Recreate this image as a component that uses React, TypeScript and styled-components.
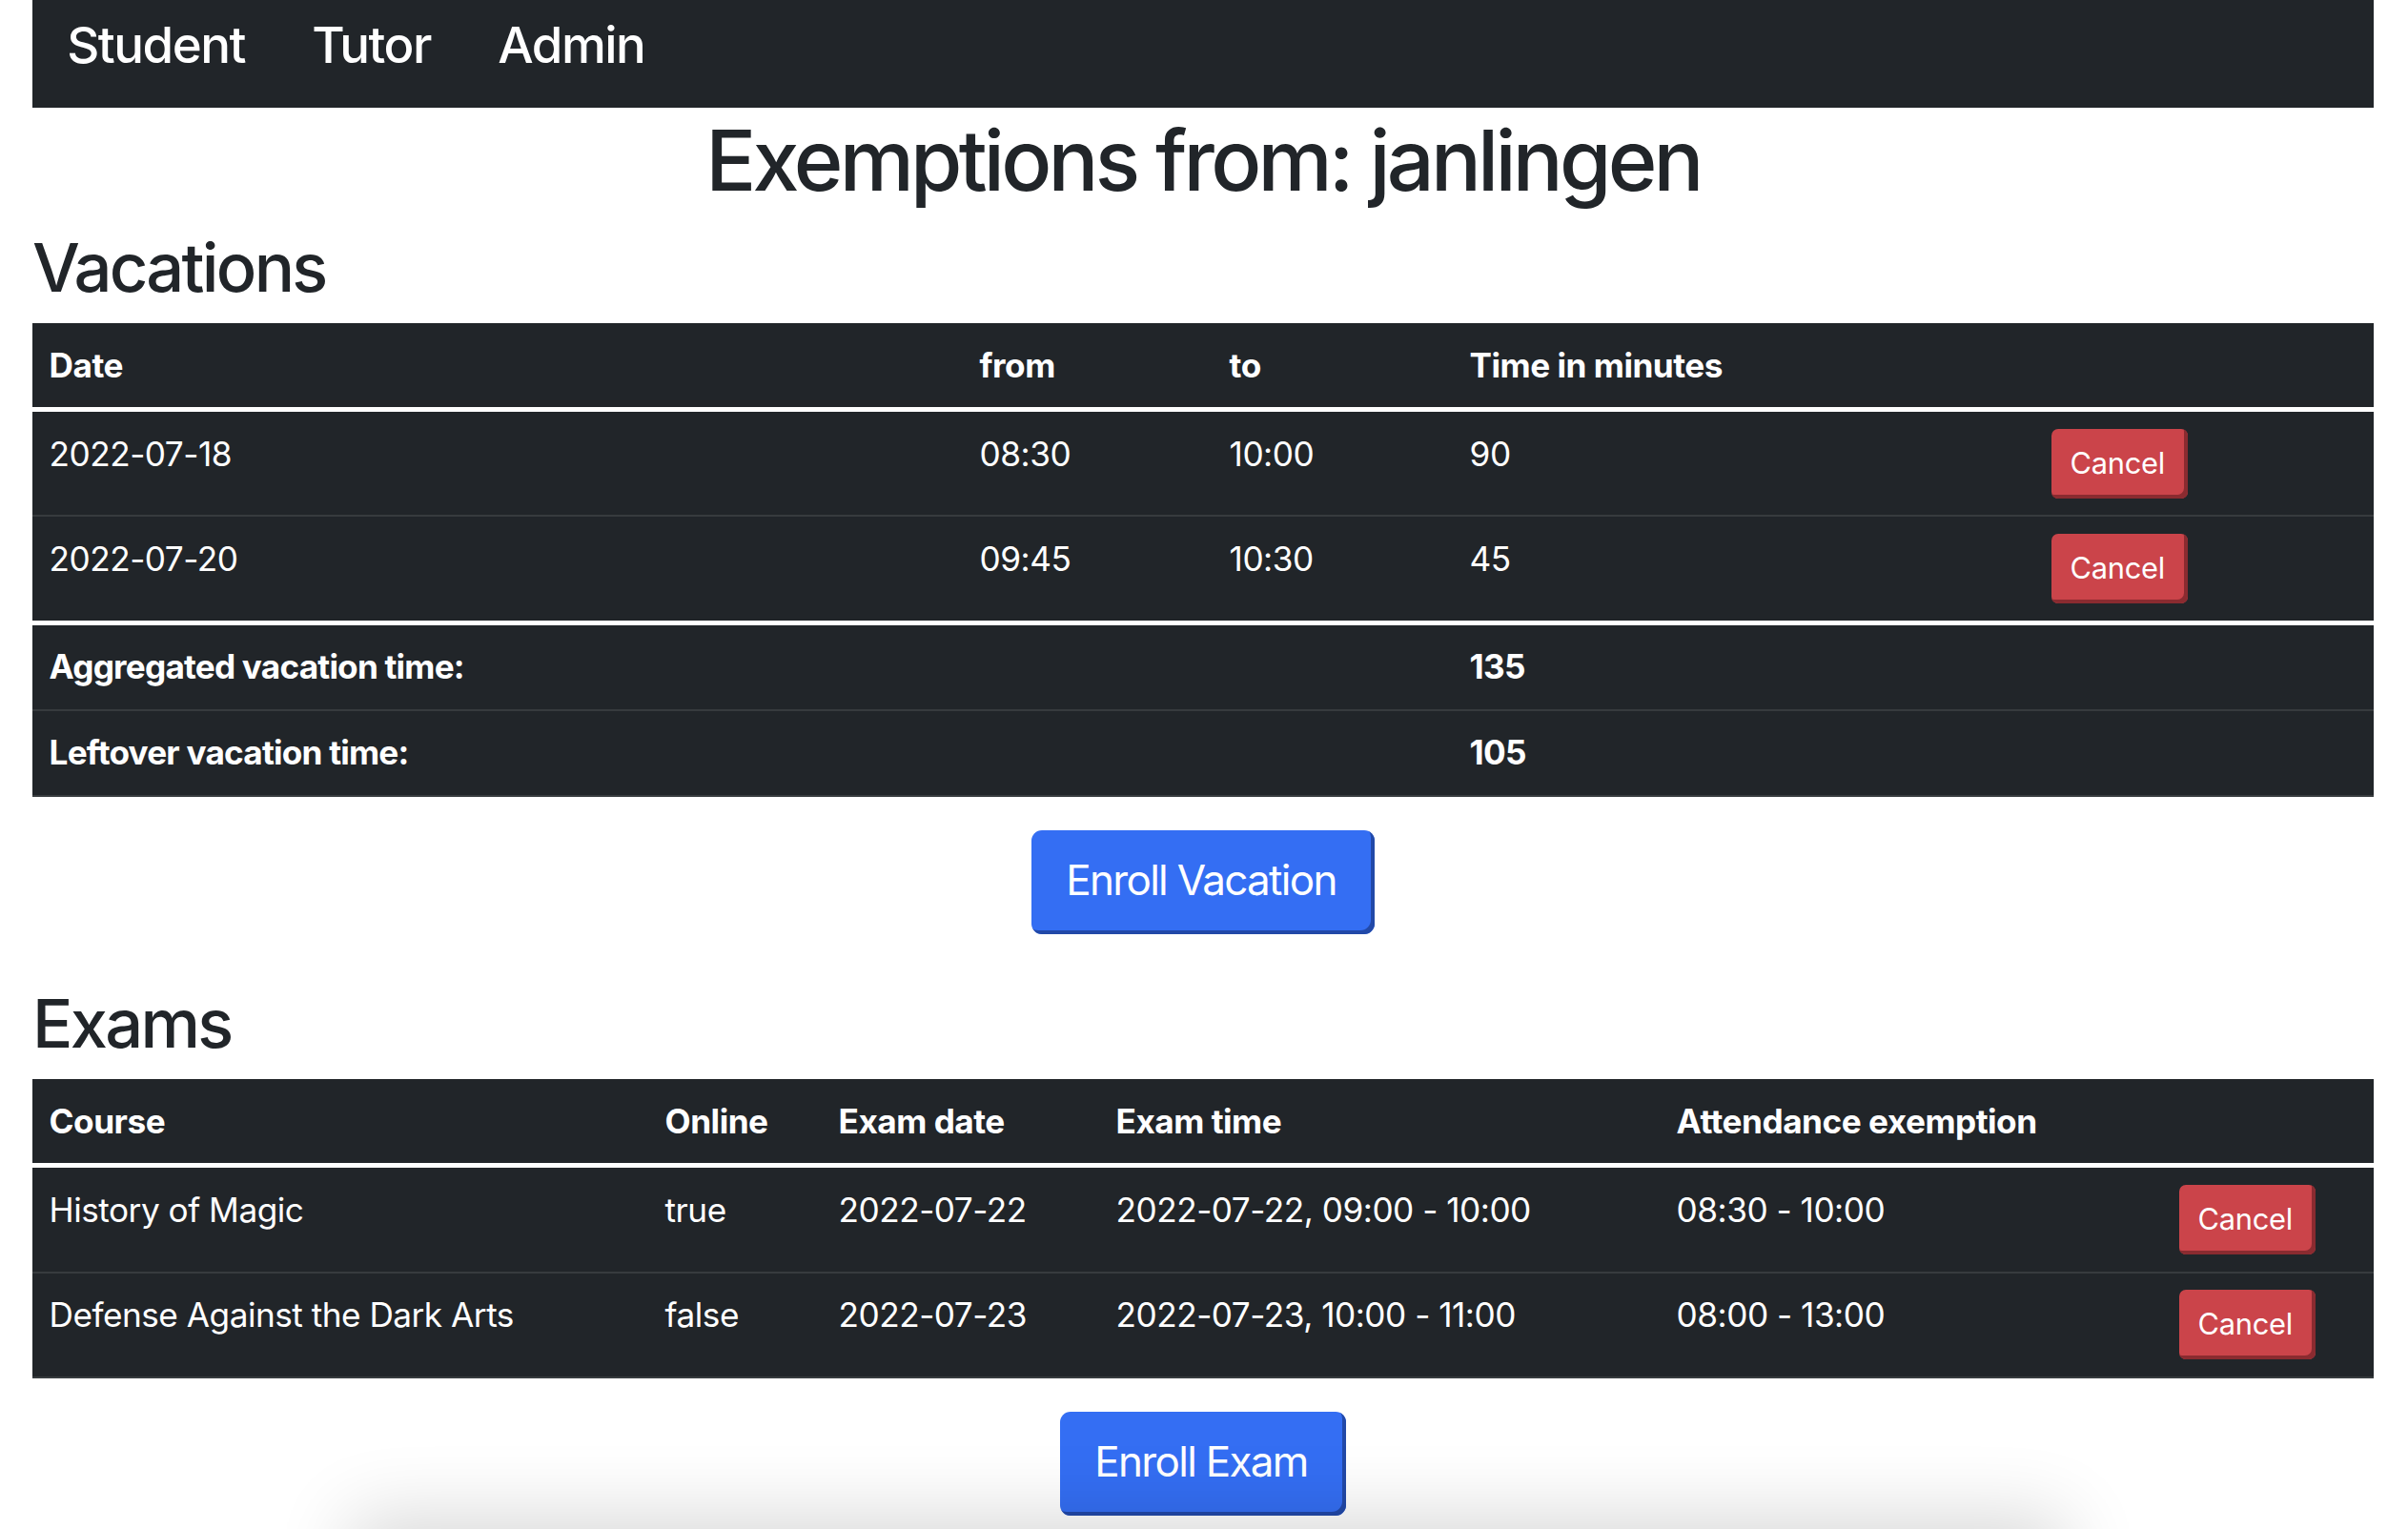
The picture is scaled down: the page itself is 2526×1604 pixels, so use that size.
import React from "react";
import styled, { createGlobalStyle } from "styled-components";

const GlobalStyle = createGlobalStyle`
  html, body {
    margin: 0;
    padding: 0;
    background: #ffffff;
  }
  body {
    font-family: Inter, "Noto Sans", "Liberation Sans", sans-serif;
    color: #212529;
    -webkit-font-smoothing: antialiased;
  }
  * { box-sizing: border-box; }
`;

const Page = styled.div`
  padding: 0 36px 0 34px;
  display: flex;
  flex-direction: column;
`;

const NavBar = styled.nav`
  height: 113px;
  background: #212529;
  display: flex;
  align-items: flex-start;
  padding: 8px 0 0 1px;
`;

const NavLink = styled.a`
  font-size: 52.8px;
  line-height: 1.5;
  font-weight: 500;
  color: #ffffff;
  padding: 0 35.2px;
  text-decoration: none;
  letter-spacing: -1.5px;
`;

const Title = styled.h1`
  font-size: 88px;
  line-height: 1.2;
  font-weight: 500;
  text-align: center;
  margin: 3px 0 17px;
  letter-spacing: -3.8px;
`;

const SectionTitle = styled.h2`
  font-size: 70.4px;
  line-height: 1.2;
  font-weight: 500;
  margin: 0 0 16px;
  letter-spacing: -2.7px;
`;

const Table = styled.table`
  width: 100%;
  table-layout: fixed;
  border-collapse: collapse;
  background: #212529;
  color: #ffffff;
  font-size: 35.2px;
  line-height: 1.5;
  vertical-align: top;
  margin: 0 0 35px;
  letter-spacing: -0.5px;
`;

const Col = styled.col<{ $w: number }>`
  width: ${(p) => p.$w}px;
`;

const Head = styled.thead``;

const Body = styled.tbody<{ $divider?: boolean }>`
  border-top: ${(p) => (p.$divider ? "5px solid #ffffff" : "none")};
`;

const Row = styled.tr`
  border-bottom: 2px solid #373b3e;
`;

const HeadCell = styled.th`
  text-align: left;
  font-weight: 700;
  padding: 17.6px;
  vertical-align: top;
`;

const Cell = styled.td<{ $bold?: boolean }>`
  padding: 17.6px;
  font-weight: ${(p) => (p.$bold ? 700 : 400)};
  letter-spacing: ${(p) => (p.$bold ? "-0.8px" : "-0.5px")};
  vertical-align: top;
  white-space: nowrap;
`;

const CancelButton = styled.button`
  display: inline-block;
  vertical-align: top;
  font-family: inherit;
  font-size: 30.8px;
  line-height: 46.2px;
  letter-spacing: -0.3px;
  color: #ffffff;
  background: #cb444a;
  border: none;
  border-radius: 7px;
  padding: 13px 24px 14px 20px;
  box-shadow: inset -4px -4px 0 #8a2b30;
  cursor: pointer;
`;

const ButtonRow = styled.div<{ $gap: number }>`
  display: flex;
  justify-content: center;
  margin-bottom: ${(p) => p.$gap}px;
`;

const PrimaryButton = styled.button`
  font-family: inherit;
  font-size: 44px;
  line-height: 66px;
  letter-spacing: -1.7px;
  color: #ffffff;
  background: #346ef3;
  border: none;
  border-radius: 11px;
  padding: 19px 40px 24px 36px;
  box-shadow: inset -4px -4px 0 #2249a8;
  cursor: pointer;
`;

const BottomShade = styled.div`
  position: fixed;
  left: 380px;
  right: 372px;
  bottom: -80px;
  height: 80px;
  background: #ffffff;
  box-shadow: 0 0 80px 12px rgba(0, 0, 0, 0.16);
  pointer-events: none;
  z-index: 10;
`;

const vacations = [
  { date: "2022-07-18", from: "08:30", to: "10:00", minutes: "90" },
  { date: "2022-07-20", from: "09:45", to: "10:30", minutes: "45" },
];

const exams = [
  {
    course: "History of Magic",
    online: "true",
    date: "2022-07-22",
    time: "2022-07-22, 09:00 - 10:00",
    exemption: "08:30 - 10:00",
  },
  {
    course: "Defense Against the Dark Arts",
    online: "false",
    date: "2022-07-23",
    time: "2022-07-23, 10:00 - 11:00",
    exemption: "08:00 - 13:00",
  },
];

export default function App() {
  return (
    <>
      <GlobalStyle />
      <Page>
        <NavBar>
          <NavLink>Student</NavLink>
          <NavLink>Tutor</NavLink>
          <NavLink>Admin</NavLink>
        </NavBar>

        <Title>Exemptions from: janlingen</Title>

        <SectionTitle>Vacations</SectionTitle>
        <Table>
          <colgroup>
            <Col $w={976} />
            <Col $w={262} />
            <Col $w={252} />
            <Col $w={610} />
            <Col $w={356} />
          </colgroup>
          <Head>
            <tr>
              <HeadCell>Date</HeadCell>
              <HeadCell>from</HeadCell>
              <HeadCell>to</HeadCell>
              <HeadCell>Time in minutes</HeadCell>
              <HeadCell />
            </tr>
          </Head>
          <Body $divider>
            {vacations.map((v) => (
              <Row key={v.date}>
                <Cell>{v.date}</Cell>
                <Cell>{v.from}</Cell>
                <Cell>{v.to}</Cell>
                <Cell>{v.minutes}</Cell>
                <Cell>
                  <CancelButton>Cancel</CancelButton>
                </Cell>
              </Row>
            ))}
          </Body>
          <Body $divider>
            <Row>
              <Cell $bold colSpan={3}>
                Aggregated vacation time:
              </Cell>
              <Cell $bold>135</Cell>
              <Cell />
            </Row>
            <Row>
              <Cell $bold colSpan={3}>
                Leftover vacation time:
              </Cell>
              <Cell $bold>105</Cell>
              <Cell />
            </Row>
          </Body>
        </Table>

        <ButtonRow $gap={52}>
          <PrimaryButton>Enroll Vacation</PrimaryButton>
        </ButtonRow>

        <SectionTitle>Exams</SectionTitle>
        <Table>
          <colgroup>
            <Col $w={646} />
            <Col $w={182} />
            <Col $w={291} />
            <Col $w={588} />
            <Col $w={527} />
            <Col $w={222} />
          </colgroup>
          <Head>
            <tr>
              <HeadCell>Course</HeadCell>
              <HeadCell>Online</HeadCell>
              <HeadCell>Exam date</HeadCell>
              <HeadCell>Exam time</HeadCell>
              <HeadCell>Attendance exemption</HeadCell>
              <HeadCell />
            </tr>
          </Head>
          <Body $divider>
            {exams.map((e) => (
              <Row key={e.course}>
                <Cell>{e.course}</Cell>
                <Cell>{e.online}</Cell>
                <Cell>{e.date}</Cell>
                <Cell>{e.time}</Cell>
                <Cell>{e.exemption}</Cell>
                <Cell>
                  <CancelButton>Cancel</CancelButton>
                </Cell>
              </Row>
            ))}
          </Body>
        </Table>

        <ButtonRow $gap={12}>
          <PrimaryButton>Enroll Exam</PrimaryButton>
        </ButtonRow>
      </Page>
      <BottomShade />
    </>
  );
}
